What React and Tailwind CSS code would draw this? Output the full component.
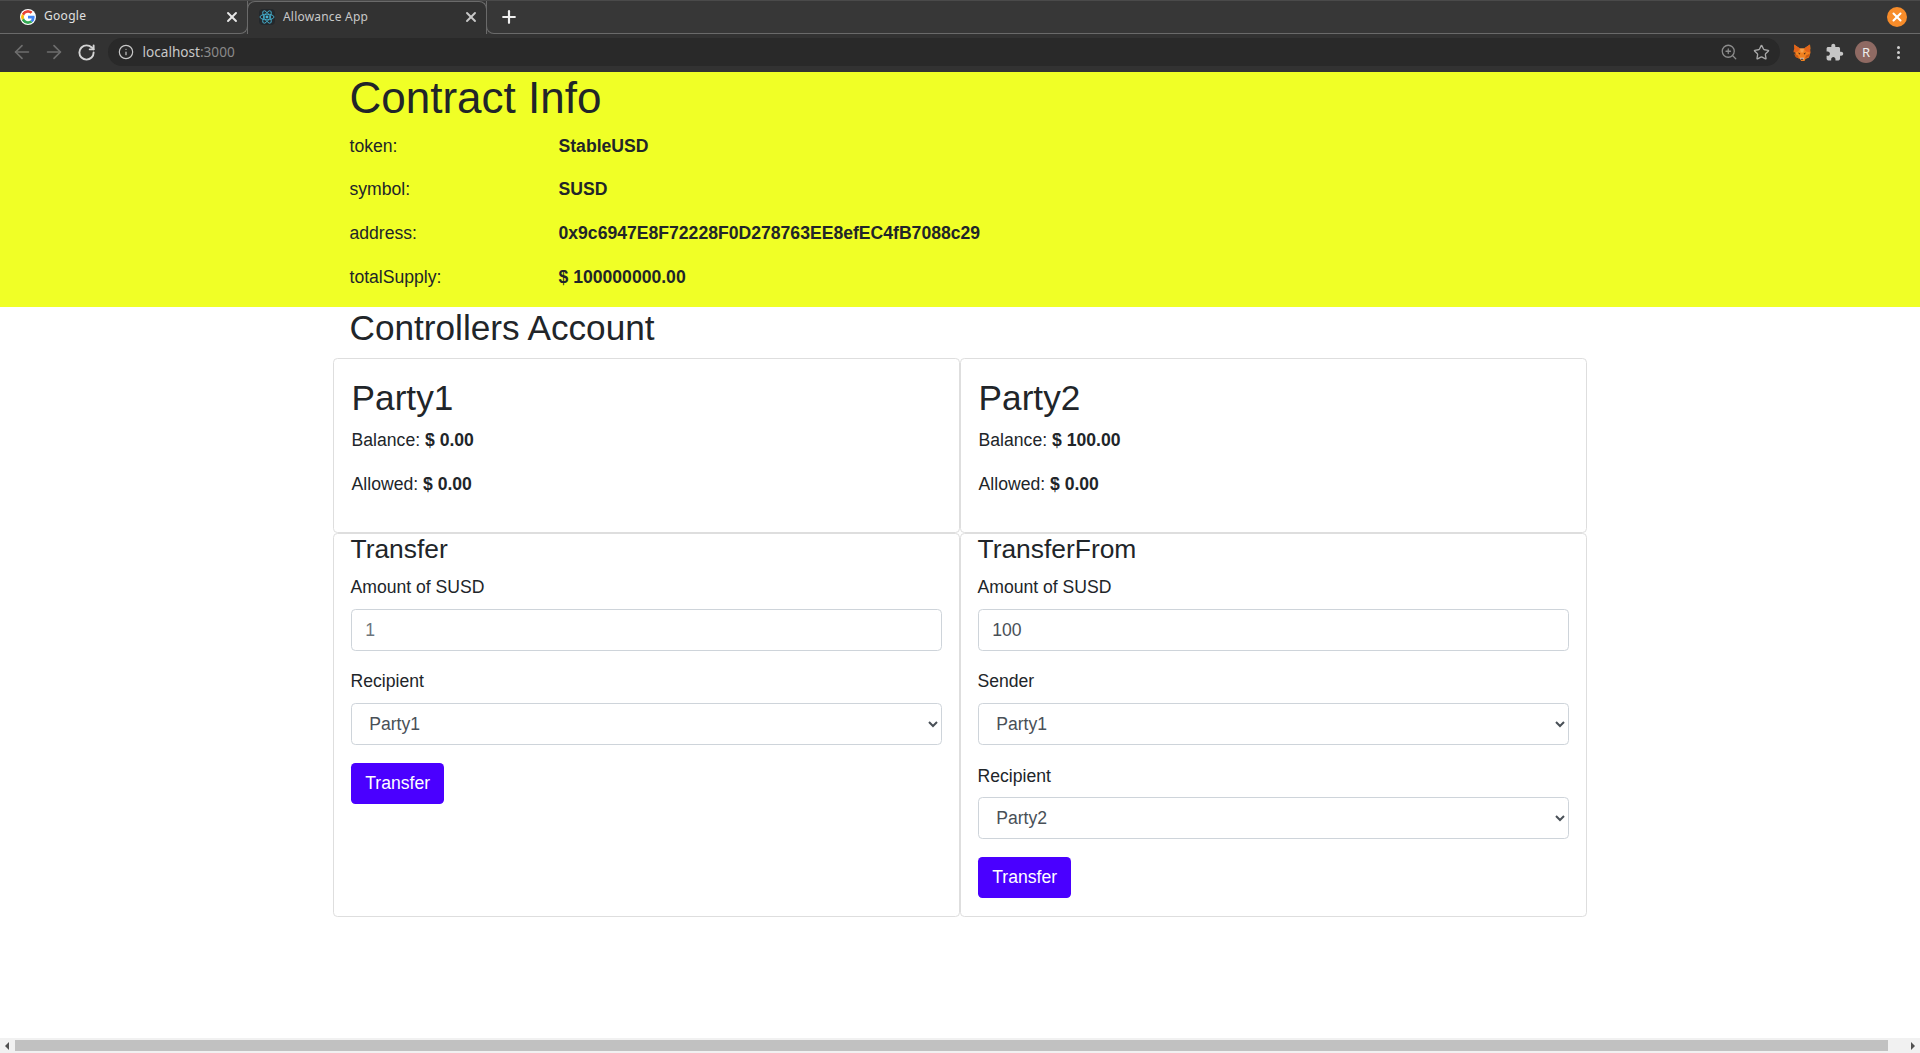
import React from "react";
import { ArrowLeft, ArrowRight, RotateCw, Info, ZoomIn, Star, X, Plus } from "lucide-react";

const sans = "font-['Liberation_Sans',Arial,sans-serif]";
const ui = "font-['Noto_Sans','Open_Sans',sans-serif]";

function GoogleG() {
  return (
    <svg viewBox="0 0 48 48" className="w-4 h-4 rounded-full bg-white p-[1px]">
      <path fill="#EA4335" d="M24 9.500c3.500 0 6.700 1.200 9.200 3.600l6.900-6.900C35.900 2.400 30.500 0 24 0 14.600 0 6.500 5.400 2.600 13.200l8 6.200C12.500 13.700 17.800 9.500 24 9.500z" />
      <path fill="#4285F4" d="M46.900 24.500c0-1.600-.1-3.100-.4-4.500H24v9h12.900c-.6 3-2.200 5.500-4.700 7.200l7.700 6c4.500-4.200 7-10.300 7-17.700z" />
      <path fill="#FBBC05" d="M10.600 28.600c-.5-1.400-.8-3-.8-4.600s.3-3.200.8-4.600l-8-6.200C.9 16.500 0 20.100 0 24s.9 7.500 2.600 10.800l8-6.200z" />
      <path fill="#34A853" d="M24 48c6.500 0 11.900-2.100 15.900-5.800l-7.700-6c-2.100 1.500-4.900 2.300-8.200 2.300-6.200 0-11.500-4.200-13.400-9.900l-8 6.200C6.500 42.600 14.600 48 24 48z" />
    </svg>
  );
}

function ReactIcon() {
  return (
    <span className="w-4 h-4 rounded-sm bg-[#24282c] flex items-center justify-center">
      <svg viewBox="-12 -12 24 24" className="w-4 h-4" fill="none" stroke="#45b4d4" strokeWidth="1.3">
        <circle r="2.200" fill="#45b4d4" stroke="none" />
        <ellipse rx="10.500" ry="4.200" />
        <ellipse rx="10.500" ry="4.200" transform="rotate(60)" />
        <ellipse rx="10.500" ry="4.200" transform="rotate(120)" />
      </svg>
    </span>
  );
}

function Fox() {
  return (
    <svg viewBox="0 0 18 17" className="w-[18px] h-[17px]">
      <path fill="#f0811f" d="M1 0.500l6 4h4l6-4 .5 4-.7 3 .7 1-1.500 5-3.500 1.500-1 2h-3.400l-1-2-3.500-1.500-1.500-5 .7-1-.7-3z" />
      <path fill="#e2641a" d="M1 0.500l6 4-2 3-4.200 1-.3-1 .7-3zM17 0.500l-6 4 2 3 4.200 1 .3-1-.7-3z" />
      <path fill="#cd5a12" d="M1 9.500l4 2 1 3-3.500-1.500zM17 9.500l-4 2-1 3 3.500-1.500z" />
      <path fill="#f8a04a" d="M7 4.500h4l-.7 4h-2.600z" />
      <path fill="#5a3218" d="M5 8.500l2.300.8-.8 1.500zM13 8.500l-2.300.8.8 1.500z" />
      <path fill="#d8c8ba" d="M6.800 13.800h4.400l-1 1.800h-2.400z" />
      <path fill="#35261c" d="M7.800 14.700h2.400l-.4 1h-1.600z" />
    </svg>
  );
}

function ExtensionIcon() {
  return (
    <svg viewBox="0 0 24 24" className="w-[19px] h-[19px]" fill="#c6c6c6">
      <path d="M20.500 11H19V7c0-1.100-.9-2-2-2h-4V3.500C13 2.120 11.880 1 10.500 1S8 2.120 8 3.500V5H4c-1.100 0-1.990.9-1.990 2v3.800H3.500c1.490 0 2.700 1.210 2.700 2.700s-1.210 2.700-2.700 2.700H2V20c0 1.100.9 2 2 2h3.800v-1.500c0-1.490 1.210-2.700 2.700-2.700 1.490 0 2.700 1.210 2.700 2.700V22H17c1.100 0 2-.9 2-2v-4h1.500c1.380 0 2.500-1.120 2.500-2.500S21.880 11 20.500 11z" />
    </svg>
  );
}

function Browser() {
  return (
    <div className={`${ui} shrink-0 bg-[#373737]`}>
      <div className="h-[34px] flex items-end border-t border-[#4a4a4a]">
        <div className="w-[248px] h-[33px] shrink-0 flex items-center pl-[20px] pr-[7px] pb-[1px] gap-[8px] border-r border-b border-[#6a6a6a] rounded-br-[8px] text-[#e0e0e0] text-[12px]">
          <GoogleG />
          <span className="flex-1 tracking-[0.3px]">Google</span>
          <X size={16} strokeWidth={2.800} className="text-[#e8e8e8]" />
        </div>
        <div className="-ml-[1px] w-[240px] h-[33px] shrink-0 flex items-center pl-[11px] pr-[7px] pb-[2px] gap-[8px] bg-[#323232] border border-b-0 border-[#6a6a6a] rounded-t-[8px] text-[#c8c8c8] text-[12px]">
          <ReactIcon />
          <span className="flex-1 tracking-[0.2px]">Allowance App</span>
          <X size={16} strokeWidth={2.800} className="text-[#c8c8c8]" />
        </div>
        <div className="-ml-[1px] flex-1 h-[33px] flex items-center pl-[12px] pb-[1px] border-l border-b border-[#6a6a6a] rounded-bl-[8px]">
          <Plus size={20} strokeWidth={2.600} className="text-[#f0f0f0]" />
          <div className="flex-1" />
          <div className="mr-[13px] w-5 h-5 rounded-full bg-[#f78c2a] flex items-center justify-center">
            <X size={14} strokeWidth={3.500} className="text-white" />
          </div>
        </div>
      </div>
      <div className="h-[38px] flex items-center pl-[11px] pb-[2px] bg-[#323232]">
        <ArrowLeft size={22} strokeWidth={1.800} className="text-[#6e6e6e]" />
        <ArrowRight size={22} strokeWidth={1.800} className="text-[#6e6e6e] ml-[10px]" />
        <RotateCw size={19} strokeWidth={2.400} className="text-[#d4d4d4] ml-[11.500px]" />
        <div className="ml-[12.500px] w-[1672px] h-[28px] shrink-0 rounded-full bg-[#292929] flex items-center pl-[10px] pr-[10px]">
          <Info size={16} strokeWidth={1.800} className="text-[#c8c8c8]" />
          <span className="ml-[8.500px] text-[13.600px] text-[#c8c8c8]">localhost<span className="text-[#8a8a8a]">:3000</span></span>
          <span className="flex-1" />
          <ZoomIn size={18} strokeWidth={1.700} className="text-[#8c8c8c]" />
          <Star size={17} strokeWidth={1.900} className="text-[#a8a8a8] ml-[15px]" />
        </div>
        <span className="ml-[13px]"><Fox /></span>
        <span className="ml-[13.500px]"><ExtensionIcon /></span>
        <div className="ml-[11.500px] w-[22px] h-[22px] rounded-full bg-[#8f6a63] text-[#eee] text-[13px] flex items-center justify-center">R</div>
        <div className="ml-[19.500px] flex flex-col gap-[2px]">
          <span className="w-[3px] h-[3px] rounded-full bg-[#d0d0d0]" />
          <span className="w-[3px] h-[3px] rounded-full bg-[#d0d0d0]" />
          <span className="w-[3px] h-[3px] rounded-full bg-[#d0d0d0]" />
        </div>
      </div>
    </div>
  );
}

function InfoRow({ label, value }) {
  return (
    <div className="flex h-[26.400px] mb-[17.300px] last:mb-0">
      <div className="w-[209px]">{label}</div>
      <div className="font-bold">{value}</div>
    </div>
  );
}

function Field({ label, children }) {
  return (
    <div className="mb-[17.600px]">
      <label className="block h-[26.400px] mb-[8.500px]">{label}</label>
      {children}
    </div>
  );
}

const ctl = "block w-[591px] ml-[0.500px] h-[41.500px] bg-white border border-[#ced4da] rounded-[4.400px] text-[17.600px] outline-none";

function Select({ value }) {
  return (
    <select defaultValue={value} className={`${ctl} pl-[13.200px] pr-[24px] text-[#495057] ${sans}`}>
      <option>Party1</option>
      <option>Party2</option>
    </select>
  );
}

function Button() {
  return (
    <div className="pt-[0.500px]">
      <button className="block ml-[0.500px] h-[41px] px-[14.200px] rounded-[4.400px] bg-[#4a00ff] text-white text-[17.600px]">Transfer</button>
    </div>
  );
}

function Party({ name, balance }) {
  return (
    <div className="border border-[#dedede] rounded-[4.400px] h-[175px] px-[17.600px] pt-[17.600px]">
      <h2 className="text-[35.200px] leading-[42.240px] mb-[8px]">{name}</h2>
      <p className="h-[26.400px] mb-[17.600px]">Balance: <b>$ {balance}</b></p>
      <p className="h-[26.400px]">Allowed: <b>$ 0.00</b></p>
    </div>
  );
}

function FormCard({ title, amount, placeholder, children }) {
  return (
    <div className="border border-[#dedede] rounded-[4.400px] px-[16.500px]">
      <h4 className="text-[26.400px] leading-[31.680px] mb-[8.800px]">{title}</h4>
      <Field label="Amount of SUSD">
        <input
          readOnly
          value={amount}
          placeholder={placeholder}
          className={`${ctl} px-[13.200px] text-[#495057] placeholder:text-[#6c757d] ${sans}`}
        />
      </Field>
      {children}
    </div>
  );
}

function ScrollBar() {
  return (
    <div className="h-[15px] shrink-0 bg-[#f1f1f1] flex items-center">
      <div className="w-[15px] flex justify-center pr-[1px]">
        <span className="w-0 h-0 border-y-[4px] border-y-transparent border-r-[4px] border-r-[#505050]" />
      </div>
      <div className="w-[1873px] h-[11px] bg-[#c1c1c1]" />
      <div className="flex-1 flex justify-end pr-[5px]">
        <span className="w-0 h-0 border-y-[4px] border-y-transparent border-l-[4px] border-l-[#505050]" />
      </div>
    </div>
  );
}

export default function App() {
  return (
    <div className={`${sans} h-screen flex flex-col overflow-hidden bg-white text-[#212529] text-[17.600px] leading-[26.400px]`}>
      <Browser />
      <div className="flex-1 min-h-0">
        <section className="bg-[#f0ff26] h-[235px] pl-[349.500px]">
          <h1 className="text-[44px] leading-[52.800px] mb-[7.800px]">Contract Info</h1>
          <InfoRow label="token:" value="StableUSD" />
          <InfoRow label="symbol:" value="SUSD" />
          <InfoRow label="address:" value="0x9c6947E8F72228F0D278763EE8efEC4fB7088c29" />
          <InfoRow label="totalSupply:" value="$ 100000000.00" />
        </section>
        <h2 className="pl-[349.500px] text-[35.200px] leading-[42.240px] mb-[8.760px]">Controllers Account</h2>
        <div className="ml-[333px] w-[1254px] grid grid-cols-2">
          <Party name="Party1" balance="0.00" />
          <Party name="Party2" balance="100.00" />
          <FormCard title="Transfer" placeholder="1" amount="">
            <Field label="Recipient"><Select value="Party1" /></Field>
            <Button />
          </FormCard>
          <FormCard title="TransferFrom" amount="100">
            <Field label="Sender"><Select value="Party1" /></Field>
            <div className="pt-[0.400px]">
              <Field label="Recipient"><div className="-mt-[0.400px]"><Select value="Party2" /></div></Field>
            </div>
            <div className="pb-[18px]"><Button /></div>
          </FormCard>
        </div>
      </div>
      <ScrollBar />
    </div>
  );
}
